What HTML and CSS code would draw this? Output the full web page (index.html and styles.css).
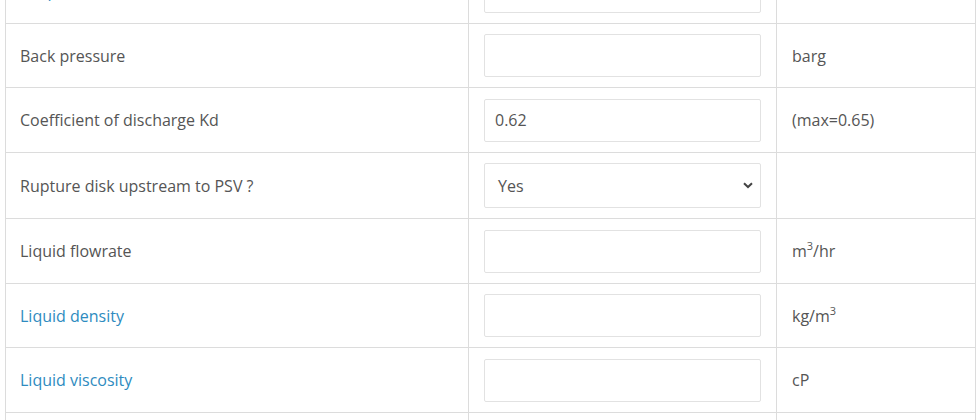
FILE: index.html
```html
<!DOCTYPE html>
<html>
<head>
<meta charset="utf-8">
<link rel="stylesheet" href="styles.css">
</head>
<body>
<div class="wrap">
<table class="calc">
  <colgroup><col class="c1"><col class="c2"><col class="c3"></colgroup>
  <tr>
    <td><a class="lbl-link">Set pressure</a></td>
    <td><input class="field" type="text"></td>
    <td></td>
  </tr>
  <tr>
    <td>Back pressure</td>
    <td><input class="field" type="text"></td>
    <td>barg</td>
  </tr>
  <tr>
    <td>Coefficient of discharge Kd</td>
    <td><input class="field" type="text" value="0.62"></td>
    <td>(max=0.65)</td>
  </tr>
  <tr>
    <td>Rupture disk upstream to PSV ?</td>
    <td>
      <div class="select">
        <span>Yes</span>
        <svg class="chev" width="10" height="7" viewBox="0 0 10 7"><path d="M1 1.2 L5 5 L9 1.2" fill="none" stroke="#444" stroke-width="2"/></svg>
      </div>
    </td>
    <td></td>
  </tr>
  <tr>
    <td>Liquid flowrate</td>
    <td><input class="field" type="text"></td>
    <td>m<sup>3</sup>/hr</td>
  </tr>
  <tr>
    <td><a class="lbl-link">Liquid density</a></td>
    <td><input class="field" type="text"></td>
    <td>kg/m<sup>3</sup></td>
  </tr>
  <tr>
    <td><a class="lbl-link">Liquid viscosity</a></td>
    <td><input class="field" type="text"></td>
    <td>cP</td>
  </tr>
  <tr>
    <td class="empty"></td>
    <td><input class="field" type="text"></td>
    <td></td>
  </tr>
</table>
</div>
</body>
</html>
```
FILE: styles.css
```css
html, body {
  margin: 0;
  padding: 0;
  background: #fff;
  overflow: hidden;
}
.wrap {
  margin-top: -42px;
  padding: 0 5px;
}
.calc {
  width: 970px;
  border-collapse: collapse;
  table-layout: fixed;
  font-family: "Open Sans", "Liberation Sans", sans-serif;
  font-size: 16px;
  color: #555;
}
.c1 { width: 463px; }
.c2 { width: 308px; }
.c3 { width: 199px; }
.calc td {
  border: 1px solid #dcdcdc;
  padding: 10.5px 15px 10px 14px;
  vertical-align: middle;
  line-height: 20px;
}
.calc td + td { padding-left: 15px; }
.lbl-link {
  color: #2e8bc0;
  text-decoration: none;
}
.field {
  display: block;
  box-sizing: border-box;
  width: 100%;
  height: 43px;
  margin: 0;
  border: 1px solid #e2e2e2;
  border-radius: 2px;
  padding: 0 10px;
  font-family: "Open Sans", "Liberation Sans", sans-serif;
  font-size: 16px;
  color: #555;
  background: #fff;
  outline: none;
}
.select {
  box-sizing: border-box;
  height: 45px;
  border: 1px solid #e2e2e2;
  border-radius: 2px;
  padding: 0 7px 0 13px;
  display: flex;
  align-items: center;
  justify-content: space-between;
  color: #555;
}
.chev { display: block; }
sup {
  font-size: 11px;
  line-height: 0;
  vertical-align: 7px;
}
```
